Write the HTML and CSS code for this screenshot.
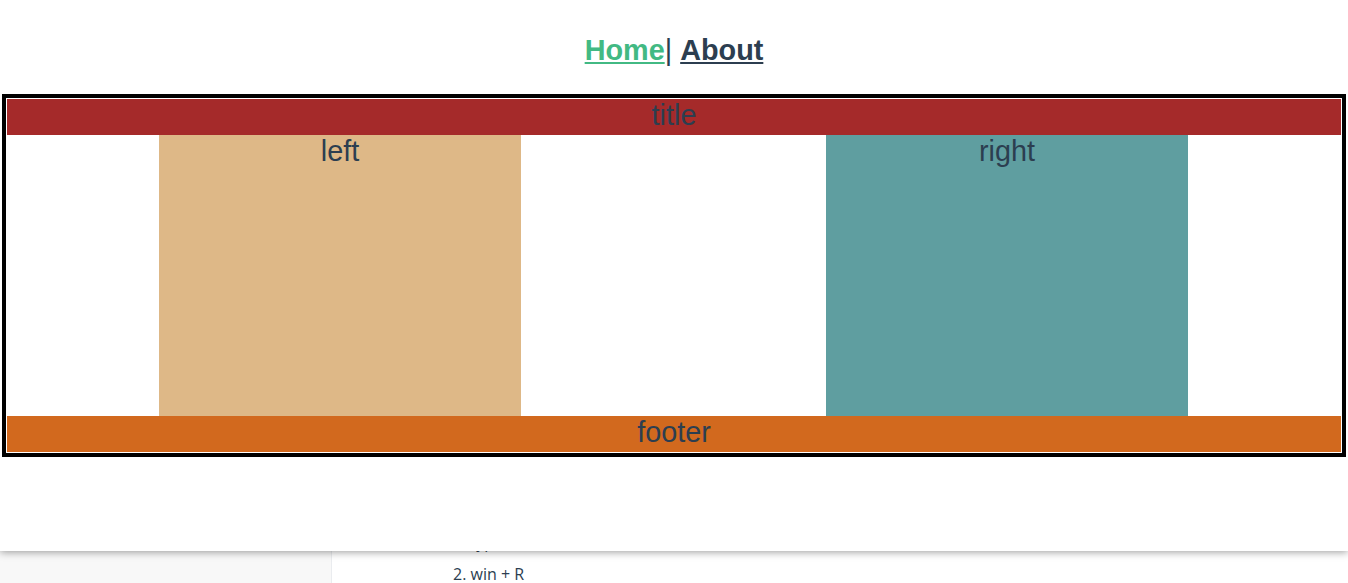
FILE: index.html
```html
<!DOCTYPE html>
<html lang="en">
<head>
<meta charset="utf-8">
<title>Layout demo</title>
<link rel="stylesheet" href="styles.css">
</head>
<body>
<div class="doc">
  <aside class="sidebar"></aside>
  <main class="content">
    <p class="step">1. type cmd</p>
    <p class="step">2. win + R</p>
  </main>
</div>
<div class="demo">
  <nav class="nav"><a class="nav-link active" href="#">Home</a><span class="sep">|</span> <a class="nav-link" href="#">About</a></nav>
  <div class="layout">
    <div class="cell title">title</div>
    <div class="cell gap"></div>
    <div class="cell left">left</div>
    <div class="cell gap"></div>
    <div class="cell right">right</div>
    <div class="cell gap"></div>
    <div class="cell footer">footer</div>
  </div>
</div>
</body>
</html>
```
FILE: styles.css
```css
html, body {
  margin: 0;
  padding: 0;
  height: 100%;
  overflow: hidden;
}
body {
  font-family: "Liberation Sans", Arial, sans-serif;
  color: #2c3e50;
  background: #fff;
}
.doc {
  display: flex;
  height: 100%;
}
.sidebar {
  width: 331px;
  flex: none;
  background: #f8f8f8;
  border-right: 1px solid #eaecef;
}
.content {
  flex: 1;
  padding: 526px 0 0 121px;
  font-family: "Open Sans", sans-serif;
  font-size: 16px;
  color: #2c3e50;
}
.step {
  margin: 0;
  line-height: 32px;
}
.demo {
  position: absolute;
  top: 0;
  left: 0;
  right: 0;
  height: 551px;
  background: #fff;
  box-shadow: 0 1px 8px rgba(0, 0, 0, 0.4);
  text-align: center;
  font-size: 28.8px;
}
.nav {
  padding: 34px 30px 25px;
}
.nav-link {
  font-weight: bold;
  color: #2c3e50;
}
.nav-link.active {
  color: #42b983;
}
.sep {
  font-weight: normal;
}
.layout {
  margin: 2px;
  border: 4px solid #000;
  padding: 1px;
  height: 353px;
  display: grid;
  grid-template-columns: 152px 362px 305px 362px 1fr;
  grid-template-rows: 36px 1fr 36px;
}
.title {
  grid-column: 1 / -1;
  background: #a52a2a;
}
.left {
  background: #deb887;
}
.right {
  background: #5f9ea0;
}
.footer {
  grid-column: 1 / -1;
  background: #d2691e;
}
```
